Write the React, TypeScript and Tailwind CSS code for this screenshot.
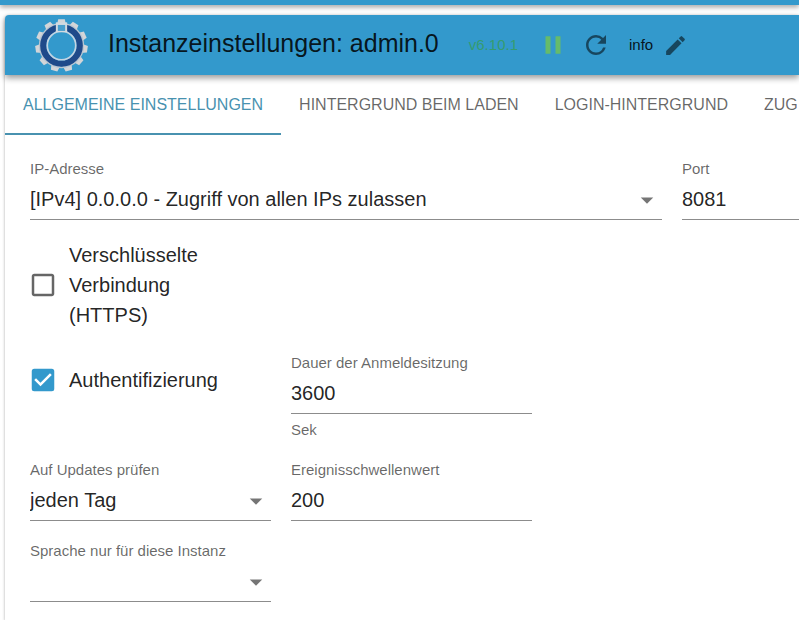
import { useState } from 'react';
import type { ReactNode } from 'react';
import {
  MdArrowDropDown,
  MdCheckBox,
  MdCheckBoxOutlineBlank,
  MdEdit,
  MdPause,
  MdRefresh,
} from 'react-icons/md';

const tabs = ['Allgemeine Einstellungen', 'Hintergrund beim Laden', 'Login-Hintergrund', 'Zug'];

const teeth = Array.from({ length: 11 }, (_, i) => (i * 360) / 11);

function Logo() {
  return (
    <svg className="size-[53px] shrink-0" viewBox="-80 -80 160 160" aria-hidden="true">
      {teeth.map((angle) => (
        <path key={angle} d="M-14 -60 L-10 -79 H10 L14 -60 Z" fill="#d3d5d8" transform={`rotate(${angle})`} />
      ))}
      <circle r="66" fill="none" stroke="#b9c6d2" strokeWidth="5" />
      <circle r="55" fill="none" stroke="#1f4a8a" strokeWidth="19" />
      <circle r="43" fill="none" stroke="#c3d4e2" strokeWidth="5" />
      <rect x="-17" y="-70" width="34" height="30" fill="#d3dae0" />
      <rect x="-11" y="-62" width="22" height="18" fill="#4a9fcd" />
    </svg>
  );
}

type FieldProps = {
  id: string;
  label: string;
  helper?: string;
  className?: string;
  children: ReactNode;
};

function Field({ id, label, helper, className, children }: FieldProps) {
  return (
    <div className={className}>
      <label htmlFor={id} className="block text-[15px] leading-5 whitespace-nowrap text-black/60">
        {label}
      </label>
      {children}
      {helper && <p className="pt-1.5 text-[15px] leading-5 text-black/60">{helper}</p>}
    </div>
  );
}

function TextInput({ id, value }: { id: string; value: string }) {
  return (
    <input
      id={id}
      type="text"
      defaultValue={value}
      className="block h-[41px] w-full border-b border-[#8c8c8c] bg-transparent text-xl text-black/87 outline-none"
    />
  );
}

function Select({ id, options }: { id: string; options: string[] }) {
  return (
    <div className="relative">
      <select
        id={id}
        className="block h-[41px] w-full appearance-none border-b border-[#8c8c8c] bg-transparent pr-8 text-xl text-black/87 outline-none"
      >
        {options.map((option) => (
          <option key={option}>{option}</option>
        ))}
      </select>
      <MdArrowDropDown className="pointer-events-none absolute inset-y-0 right-0 my-auto size-[30px] text-black/54" />
    </div>
  );
}

function Checkbox({ label, checked }: { label: string; checked?: boolean }) {
  const [on, setOn] = useState(!!checked);

  return (
    <label className="relative -ml-0.5 mr-5 flex items-center gap-[11px] text-xl leading-[30px]">
      <input
        type="checkbox"
        checked={on}
        onChange={() => setOn(!on)}
        className="absolute size-[30px] opacity-0"
      />
      {on ? (
        <MdCheckBox className="size-[30px] shrink-0 text-[#3399cc]" />
      ) : (
        <MdCheckBoxOutlineBlank className="size-[30px] shrink-0 text-black/60" />
      )}
      <span>{label}</span>
    </label>
  );
}

export default function App() {
  const [active, setActive] = useState(0);

  return (
    <div className="flex min-h-screen flex-col overflow-hidden bg-white font-['Liberation_Sans',Arial,sans-serif] text-black/87">
      <div className="h-[5px] bg-[#3399cc] shadow-[0_2px_5px_rgba(0,0,0,0.4)]" />

      <main className="mt-2.5 ml-[5px] flex-1 rounded-tl bg-white shadow-[0_1px_3px_rgba(0,0,0,0.35)]">
        <header className="flex h-[60px] items-center rounded-tl bg-[#3399cc] pl-[30px] whitespace-nowrap shadow-[0_3px_6px_rgba(0,0,0,0.4)]">
          <Logo />
          <h1 className="ml-5 pb-1 text-[25px] leading-8">Instanzeinstellungen: admin.0</h1>
          <span className="ml-[30px] text-[15px] text-[#359c70]">v6.10.1</span>
          <button type="button" aria-label="Pause" className="ml-5">
            <MdPause className="size-[30px] text-[#66bb6a]" />
          </button>
          <button type="button" aria-label="Neu starten" className="ml-[13px]">
            <MdRefresh className="size-[30px] text-black/54" />
          </button>
          <span className="ml-[18px] text-[15px]">info</span>
          <button type="button" aria-label="Bearbeiten" className="ml-2.5">
            <MdEdit className="size-[25px] text-black/54" />
          </button>
        </header>

        <div role="tablist" className="flex h-[60px] overflow-hidden">
          {tabs.map((tab, i) => (
            <button
              key={tab}
              type="button"
              role="tab"
              aria-selected={i === active}
              onClick={() => setActive(i)}
              className={
                i === active
                  ? 'shrink-0 border-b-2 border-[#4892b0] px-[18px] pt-0.5 text-base whitespace-nowrap text-[#4892b0] uppercase'
                  : 'shrink-0 border-b-2 border-transparent px-[18px] pt-0.5 text-base whitespace-nowrap text-black/60 uppercase'
              }
            >
              {tab}
            </button>
          ))}
        </div>

        <form className="flex flex-col gap-5 pt-6 pl-[25px]">
          <div className="flex gap-5">
            <Field id="ip" label="IP-Adresse" className="flex-1">
              <Select id="ip" options={['[IPv4] 0.0.0.0 - Zugriff von allen IPs zulassen']} />
            </Field>
            <Field id="port" label="Port" className="w-[117px] shrink-0">
              <TextInput id="port" value="8081" />
            </Field>
          </div>

          <div className="grid grid-cols-3 gap-5 pr-1.5 pb-[3px]">
            <Checkbox label="Verschlüsselte Verbindung (HTTPS)" />
          </div>

          <div className="grid grid-cols-3 items-start gap-5 pr-1.5">
            <div className="flex h-[54px] items-center">
              <Checkbox label="Authentifizierung" checked />
            </div>
            <Field id="ttl" label="Dauer der Anmeldesitzung" helper="Sek">
              <TextInput id="ttl" value="3600" />
            </Field>
          </div>

          <div className="grid grid-cols-3 gap-5 pr-1.5">
            <Field id="updates" label="Auf Updates prüfen">
              <Select id="updates" options={['jeden Tag', 'jede Woche', 'nie']} />
            </Field>
            <Field id="threshold" label="Ereignisschwellenwert">
              <TextInput id="threshold" value="200" />
            </Field>
          </div>

          <div className="grid grid-cols-3 gap-5 pr-1.5">
            <Field id="language" label="Sprache nur für diese Instanz">
              <Select id="language" options={['', 'Deutsch', 'English']} />
            </Field>
          </div>
        </form>
      </main>
    </div>
  );
}
